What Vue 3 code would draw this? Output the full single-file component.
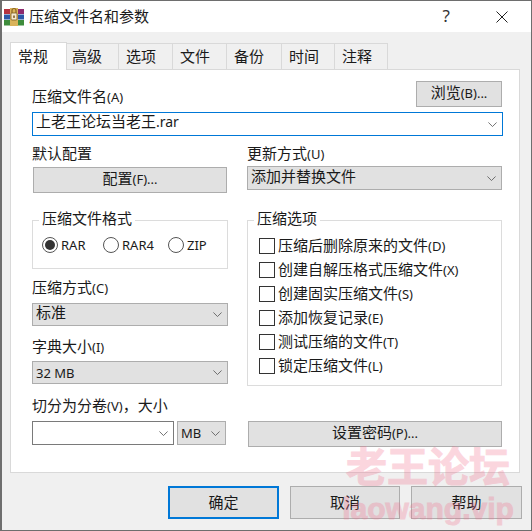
<script setup>
const tabs = ['常规', '高级', '选项', '文件', '备份', '时间', '注释']
const tabWidths = [57, 52, 54, 54, 55, 53, 53]
const formats = ['RAR', 'RAR4', 'ZIP']
const options = [
  ['压缩后删除原来的文件', '(D)'],
  ['创建自解压格式压缩文件', '(X)'],
  ['创建固实压缩文件', '(S)'],
  ['添加恢复记录', '(E)'],
  ['测试压缩的文件', '(T)'],
  ['锁定压缩文件', '(L)'],
]
</script>

<template>
  <div class="dialog">
    <header class="titlebar">
      <svg class="app-icon" width="20" height="20" viewBox="0 0 20 20">
        <rect x="0" y="2" width="20" height="5" fill="#8e2a6e" />
        <rect x="0" y="2" width="7" height="5" fill="#b5323f" />
        <rect x="0" y="7.5" width="20" height="5" fill="#2d58a8" />
        <rect x="0" y="13" width="20" height="5.5" fill="#3e8c3c" />
        <rect x="6" y="1" width="8" height="18" fill="#d9b35a" />
        <rect x="7" y="6" width="6" height="7" rx="1" fill="#f6ead0" stroke="#7a5a20" stroke-width="0.8" />
        <path d="M8 6V3.5a2 2 0 0 1 4 0V6" fill="none" stroke="#8a6420" stroke-width="1.2" />
        <rect x="9.2" y="8.5" width="1.6" height="2.4" fill="#7a5a20" />
      </svg>
      <span class="title">压缩文件名和参数</span>
      <span class="help">?</span>
      <svg class="close" width="12" height="12" viewBox="0 0 12 12">
        <path d="M0.5 0.5l11 11M11.5 0.5l-11 11" stroke="#222" stroke-width="1" fill="none" />
      </svg>
    </header>

    <main class="body">
      <nav class="tabs">
        <a
          v-for="(tab, i) in tabs"
          :key="tab"
          class="tab"
          :class="{ active: i === 0 }"
          :style="{ width: tabWidths[i] + 'px' }"
        >{{ tab }}</a>
      </nav>

      <section class="panel">
        <div class="name-row">
          <label>压缩文件名<small>(A)</small></label>
          <button class="btn browse">浏览<small>(B)...</small></button>
        </div>
        <div class="combo name-combo">
          <span class="up">上老王论坛当老王<small class="ext">.rar</small></span>
          <svg class="chev" width="9" height="5" viewBox="0 0 11 6"><path d="M0.5 0.5l5 5 5-5" fill="none" stroke="#555" /></svg>
        </div>

        <div class="columns">
          <div class="col left">
            <label>默认配置</label>
            <button class="btn profile">配置<small>(F)...</small></button>

            <fieldset class="group format">
              <legend>压缩文件格式</legend>
              <div class="radios">
                <span v-for="(f, i) in formats" :key="f" class="radio" :class="'r' + i">
                  <i class="dot" :class="{ on: i === 0 }"></i>{{ f }}
                </span>
              </div>
            </fieldset>

            <label class="l-method">压缩方式<small>(C)</small></label>
            <div class="select method">
              <span class="up">标准</span>
              <svg class="chev" width="9" height="5" viewBox="0 0 11 6"><path d="M0.5 0.5l5 5 5-5" fill="none" stroke="#555" /></svg>
            </div>

            <label class="l-dict">字典大小<small>(I)</small></label>
            <div class="select dict">
              <span>32 MB</span>
              <svg class="chev" width="9" height="5" viewBox="0 0 11 6"><path d="M0.5 0.5l5 5 5-5" fill="none" stroke="#555" /></svg>
            </div>

            <label class="l-split">切分为分卷<small>(V)</small>，大小</label>
            <div class="split-row">
              <div class="combo split">
                <svg class="chev" width="9" height="5" viewBox="0 0 11 6"><path d="M0.5 0.5l5 5 5-5" fill="none" stroke="#555" /></svg>
              </div>
              <div class="select unit">
                <span>MB</span>
                <svg class="chev" width="9" height="5" viewBox="0 0 11 6"><path d="M0.5 0.5l5 5 5-5" fill="none" stroke="#555" /></svg>
              </div>
            </div>
          </div>

          <div class="col right">
            <label>更新方式<small>(U)</small></label>
            <div class="select update">
              <span class="up">添加并替换文件</span>
              <svg class="chev" width="9" height="5" viewBox="0 0 11 6"><path d="M0.5 0.5l5 5 5-5" fill="none" stroke="#555" /></svg>
            </div>

            <fieldset class="group opts">
              <legend>压缩选项</legend>
              <div class="checks">
                <div v-for="o in options" :key="o[0]" class="check">
                  <i class="box"></i><span>{{ o[0] }}<small>{{ o[1] }}</small></span>
                </div>
              </div>
            </fieldset>

            <button class="btn password">设置密码<small>(P)...</small></button>
          </div>
        </div>
      </section>

      <footer class="actions">
        <button class="btn action primary">确定</button>
        <button class="btn action mid">取消</button>
        <button class="btn action">帮助</button>
      </footer>
    </main>

    <div class="watermark">
      <div class="wm-cn">老王论坛</div>
      <div class="wm-en">laowang.vip</div>
    </div>
  </div>
</template>

<style>
html, body { margin: 0; background: #f0f0f0; }
</style>

<style scoped>
.dialog {
  position: relative;
  box-sizing: border-box;
  width: 532px;
  height: 531px;
  border: 1px solid #6e6e6e;
  border-left-width: 2px;
  background: #f0f0f0;
  color: #1a1a1a;
  font-family: "Noto Sans", "Noto Sans CJK SC", sans-serif;
  font-size: 15px;
  line-height: 18px;
  overflow: hidden;
}

small { font-size: 13px; }
.ext { font-size: 14px; }

.titlebar {
  display: flex;
  align-items: center;
  height: 31px;
  padding: 0 23px 0 2px;
  background: #fff;
}
.app-icon { flex: none; }
.title { margin-left: 5px; flex: 1; padding-bottom: 2px; }
.help { margin-right: 46px; padding-bottom: 2px; color: #333; font-size: 17px; }

.body { padding: 11px 0 0 8px; }

.tabs { display: flex; height: 26px; }
.tab {
  box-sizing: border-box;
  height: 26px;
  padding-left: 7px;
  border: 1px solid #d9d9d9;
  border-left-width: 0;
  border-bottom-width: 0;
  background: #f0f0f0;
  line-height: 24px;
}
.tab:nth-child(2) { padding-left: 5px; }
.tab.active {
  position: relative;
  z-index: 1;
  height: 28px;
  margin-top: -1px;
  border-left-width: 1px;
  background: #fff;
  line-height: 26px;
}

.panel {
  box-sizing: border-box;
  width: 510px;
  height: 404px;
  padding: 11px 17px 0 21px;
  border: 1px solid #d9d9d9;
  background: #fff;
}

label { display: block; height: 20px; line-height: 16px; }

.btn {
  display: block;
  box-sizing: border-box;
  padding: 0 0 4px;
  border: 1px solid #adadad;
  background: #e1e1e1;
  color: #1a1a1a;
  font: inherit;
  text-align: center;
}

.name-row {
  display: flex;
  justify-content: space-between;
  align-items: flex-end;
  height: 26px;
}
.name-row label { margin-bottom: -1px; }
.browse { width: 86px; height: 26px; }

.combo, .select {
  display: flex;
  align-items: center;
  justify-content: space-between;
  box-sizing: border-box;
  border: 1px solid #7a7a7a;
  background: #fff;
  padding: 0 5px 0 3px;
}
.select { border-color: #adadad; background: #e1e1e1; }
.up { padding-bottom: 5px; }
.chev { flex: none; margin-left: auto; }

.name-combo {
  width: 471px;
  height: 24px;
  margin-top: 5px;
  border-color: #0078d7;
}

.columns {
  display: grid;
  grid-template-columns: 196px 255px;
  column-gap: 19px;
  margin-top: 9px;
}

.col { display: flex; flex-direction: column; align-items: flex-start; }

.profile { width: 194px; height: 26px; margin: 2px 0 0 1px; }

.group {
  box-sizing: border-box;
  margin: 0;
  padding: 0;
  min-width: 0;
  border: 1px solid #dcdcdc;
}
.group legend {
  margin-left: 6px;
  padding: 0 3px;
  height: 20px;
  line-height: 16px;
}

.format { width: 196px; height: 59px; margin-top: 17px; }
.radios { display: flex; padding: 7px 0 0 9px; font-size: 13px; }
.radio { display: flex; align-items: center; height: 16px; }
.r0 { width: 61px; }
.r1 { width: 65px; }
.dot {
  position: relative;
  flex: none;
  box-sizing: border-box;
  width: 16px;
  height: 16px;
  margin-right: 3px;
  border: 1px solid #555;
  border-radius: 50%;
  background: #fff;
}
.dot.on::after {
  content: "";
  position: absolute;
  inset: 2px;
  border-radius: 50%;
  background: #333;
}

.l-method { margin-top: 10px; }
.method { width: 196px; height: 23px; margin-top: 4px; }
.l-dict { margin-top: 12px; }
.dict { width: 196px; height: 23px; margin-top: 3px; font-size: 13px; }
.l-split { margin-top: 13px; }
.split-row { display: flex; gap: 3px; margin-top: 4px; }
.split { width: 142px; height: 24px; }
.unit { width: 49px; height: 24px; font-size: 13px; }

.update { width: 255px; height: 24px; margin-top: 1px; }

.opts { width: 255px; height: 176px; margin-top: 20px; }
.checks { display: flex; flex-direction: column; gap: 4px; padding: 6px 0 0 11px; }
.check { display: flex; align-items: center; height: 20px; white-space: nowrap; }
.check span { padding-bottom: 2px; }
.box {
  flex: none;
  box-sizing: border-box;
  width: 16px;
  height: 16px;
  margin-right: 3px;
  border: 1px solid #333;
  background: #fff;
}

.password { width: 254px; height: 26px; margin: 35px 0 0 1px; }

.actions {
  display: flex;
  justify-content: flex-end;
  gap: 11px;
  margin-top: 13px;
  padding-right: 9px;
}
.action { width: 111px; height: 33px; padding-bottom: 2px; }
.mid { width: 110px; }
.primary { border: 2px solid #0078d7; }

.watermark {
  position: absolute;
  left: 340px;
  top: 444px;
  width: 172px;
  text-align: center;
  color: #f36e8c;
  font-weight: 700;
  -webkit-text-stroke: 1px #f36e8c;
  opacity: 0.28;
  pointer-events: none;
}
.wm-cn { font-size: 41px; line-height: 42px; }
.wm-en { font-size: 30px; line-height: 34px; margin-top: 5px; font-family: "Liberation Sans", sans-serif; }
</style>
